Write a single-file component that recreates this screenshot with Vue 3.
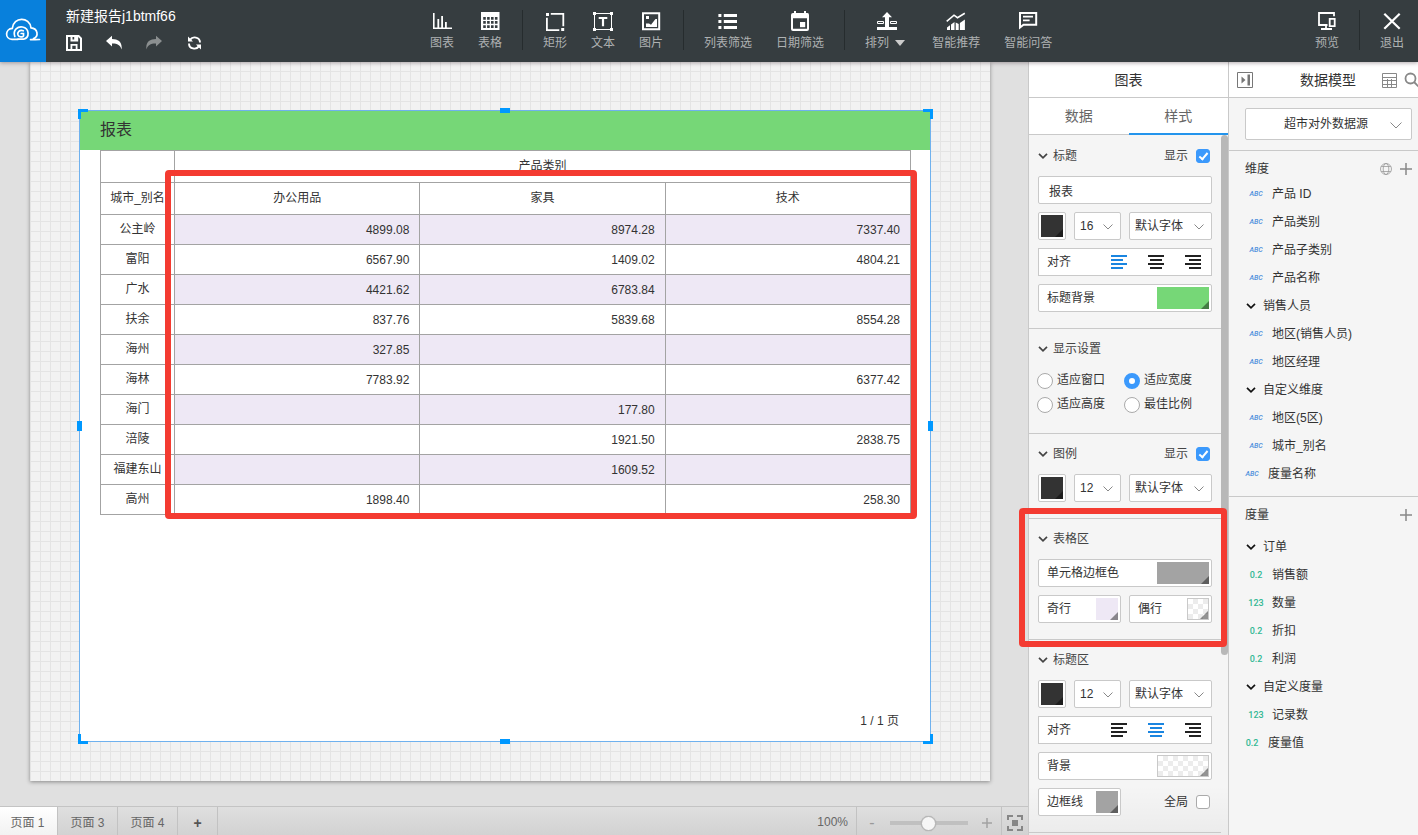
<script setup>
import { ref } from 'vue'

const icons = {
  chart: '<path d="M1 2h1.6v14.4H20V18H1z M5.4 8h1.8v8.4H5.4z M9.2 5H11v11.4H9.2z M13 11h1.8v5.4H13z"/>',
  table: '<path fill-rule="evenodd" d="M1 1h18.5v18H1z M3.2 6h2.6v2.7H3.2z M7.1 6h2.6v2.7H7.1z M11 6h2.6v2.7H11z M14.9 6h2.6v2.7h-2.6z M3.2 10.1h2.6v2.7H3.2z M7.1 10.1h2.6v2.7H7.1z M11 10.1h2.6v2.7H11z M14.9 10.1h2.6v2.7h-2.6z M3.2 14.2h2.6v2.7H3.2z M7.1 14.2h2.6v2.7H7.1z M11 14.2h2.6v2.7H11z M14.9 14.2h2.6v2.7h-2.6z"/>',
  rect: '<path d="M1 2h3v3H1z M16.2 17h3v3h-3z M5.8 2h13.4v13.3h-1.8V3.8H5.8z M1 6.8h1.8v11.4h11.5V20H1z"/>',
  text: '<path fill="none" stroke="currentColor" d="M1.5 2.5h17v16h-17z"/><path d="M0 1h3v3H0z M17 1h3v3h-3z M0 17h3v3H0z M17 17h3v3h-3z M5.7 6h8.6v2h-3.2v7.2H8.9V8H5.7z"/>',
  image: '<path fill="none" stroke="currentColor" stroke-width="2" d="M2 2.2h16.2v16H2z"/><path d="M5 5h3v3H5z M5 16v-3.6h3l2 1.4L14.500 8H16v8z"/>',
  list: '<path d="M.4 3h3v3h-3z M.4 9h3v3h-3z M.4 15h3v3h-3z M5.800 3H19v3H5.800z M5.800 9H19v3H5.800z M5.800 15H19v3H5.800z"/>',
  date: '<path fill-rule="evenodd" d="M4 0h2v2h8V0h2v2h1.500Q19 2 19 4v14q0 2-2 2H3q-2 0-2-2V4q0-2 2-2h1z M3 7.200v10.600h14V7.200z"/><path d="M10 11h5.200v5.200H10z"/>',
  arrange: '<path d="M10 1l5 5.200h-3V16h8v3H0v-3h8V6.200H5z"/><path fill="none" stroke="currentColor" d="M.5 10.500h6v2h-6z M13.500 10.500h6v2h-6z"/>',
  advise: '<path fill="none" stroke="currentColor" stroke-width="1.600" d="M.7 10.300L8 4.200l3.500 2.500L18.800 2.300"/><path d="M1 16.500l3-2.300V19H1z M5 13.500l3.500-2.500v8H5z M9.700 11.500l3 1.500v6h-3z M13.900 12l5-3.500V19h-5z"/>',
  ask: '<path fill="none" stroke="currentColor" stroke-width="2" d="M2 2h16.200v11.800H5.500L2 16.500z"/><path d="M5 4.800h10v1.700H5z M5 8.500h6.600v1.700H5z"/>',
  preview: '<path fill="none" stroke="currentColor" stroke-width="1.800" d="M17 5.200V2H2v12h8.500 M9 14v4 M4 18h11 M12.700 7.800h5v7.400h-5z"/>',
  close: '<path fill="none" stroke="currentColor" stroke-width="2.200" d="M2.300 2.800l15.400 15 M17.700 2.800l-15.400 15"/>',
  save: '<path fill-rule="evenodd" d="M0 0h13l3 3v13H0z M2 2v12h2.500V9h7v5H14V3.800L12.200 2v4.500H4.500V2z M6.500 2h1.700v2.600H6.500z M6.300 10.800v3.200h3.400v-3.200z"/>',
  undo: '<path d="M0 6l6-5.200v3.100C12.500 4 16.400 7 15.600 14.500 14.300 10.500 11.500 8.500 6 8.600v3z"/>',
  redo: '<path d="M16 6l-6-5.200v3.100C3.500 4-.4 7 .4 14.500 1.700 10.500 4.500 8.500 10 8.600v3z"/>',
  refresh: '<path fill="none" stroke="currentColor" stroke-width="1.900" d="M4.200 4.600C6.500 1.200 14 1.600 14 7.600 M12.800 11.400C10.500 14.800 3 14.400 3 8.400"/><path d="M2 1.600v5h5z M15 14.400v-5h-5z"/>'
}

const toolGroups = [
  [['chart', '图表'], ['table', '表格']],
  [['rect', '矩形'], ['text', '文本'], ['image', '图片']],
  [['list', '列表筛选'], ['date', '日期筛选']],
  [['arrange', '排列'], ['advise', '智能推荐'], ['ask', '智能问答']]
]
const quick = [['save', '保存'], ['undo', '撤销'], ['redo', '重做'], ['refresh', '刷新']]

const columns = ['办公用品', '家具', '技术']
const rows = [
  ['公主岭', '4899.08', '8974.28', '7337.40'],
  ['富阳', '6567.90', '1409.02', '4804.21'],
  ['广水', '4421.62', '6783.84', ''],
  ['扶余', '837.76', '5839.68', '8554.28'],
  ['海州', '327.85', '', ''],
  ['海林', '7783.92', '', '6377.42'],
  ['海门', '', '177.80', ''],
  ['涪陵', '', '1921.50', '2838.75'],
  ['福建东山', '', '1609.52', ''],
  ['高州', '1898.40', '', '258.30']
]

const dimensions = [
  ['ABC', '产品 ID'], ['ABC', '产品类别'], ['ABC', '产品子类别'], ['ABC', '产品名称'],
  ['group', '销售人员'], ['ABC', '地区(销售人员)'], ['ABC', '地区经理'],
  ['group', '自定义维度'], ['ABC', '地区(5区)'], ['ABC', '城市_别名'], ['ABC', '度量名称', true]
]
const measures = [
  ['group', '订单'], ['0.2', '销售额'], ['123', '数量'], ['0.2', '折扣'], ['0.2', '利润'],
  ['group', '自定义度量'], ['123', '记录数'], ['0.2', '度量值', true]
]
const fieldGroups = [
  { title: '维度', items: dimensions, globe: true },
  { title: '度量', items: measures, globe: false }
]

const fits = ['适应窗口', '适应宽度', '适应高度', '最佳比例']
const fit = ref('适应宽度')
const title = ref('报表')
const showTitle = ref(true)
const showLegend = ref(true)
const allBorders = ref(false)
const zoom = ref(50)
const titleAlign = ref('left')
const headAlign = ref('center')
const aligns = [
  ['left', 'M0 1h16M0 5h12M0 9h16M0 13h12', '左对齐'],
  ['center', 'M0 1h16M2 5h12M0 9h16M2 13h12', '居中'],
  ['right', 'M0 1h16M4 5h12M0 9h16M4 13h12', '右对齐']
]
const pages = ['页面 1', '页面 3', '页面 4']
const page = ref('页面 1')
const handles = ['tl', 'tr', 'bl', 'br', 't', 'b', 'l', 'r']
</script>

<template>
  <div class="app">
    <header class="topbar">
      <a class="logo" href="#" aria-label="首页">
        <svg viewBox="0 0 46 62" width="46" height="62" fill="none" stroke="#fff" stroke-width="1.700" stroke-linecap="round">
          <path d="M18 39.300H12C4.500 39 5 28.800 12.300 28.400 13.500 16.500 29.500 16.500 31 27.800 38 28.300 39 36.800 33.500 38.600M30.500 39.600C33 39.800 36 39.500 39.500 39.500"/>
          <path d="M14.800 36.500C12.500 29.500 18 26.300 22.500 27 29.500 28.300 30 37.500 23.500 39.200H18"/>
          <path d="M23.300 30.800C19.500 29.500 17 32.500 18 35 19 37.300 22.800 37.300 23.500 35.800V33.500H21.200"/>
        </svg>
      </a>
      <div class="report">
        <h1>新建报告j1btmf66</h1>
        <div class="quick">
          <button v-for="q in quick" :key="q[0]" :class="{ dim: q[0] === 'redo' }" :aria-label="q[1]">
            <svg viewBox="0 0 16 16" width="16" height="16" fill="currentColor" v-html="icons[q[0]]"></svg>
          </button>
        </div>
      </div>
      <nav class="tools">
        <template v-for="(group, g) in toolGroups" :key="g">
          <i v-if="g" class="rule"></i>
          <button v-for="t in group" :key="t[0]" class="tool">
            <svg viewBox="0 0 20 20" width="20" height="20" fill="currentColor" v-html="icons[t[0]]"></svg>
            <span>{{ t[1] }}<i v-if="t[0] === 'arrange'" class="caret"></i></span>
          </button>
        </template>
      </nav>
      <div class="tools end">
        <button class="tool">
          <svg viewBox="0 0 20 20" width="20" height="20" v-html="icons.preview"></svg><span>预览</span>
        </button>
        <i class="rule"></i>
        <button class="tool">
          <svg viewBox="0 0 20 20" width="20" height="20" v-html="icons.close"></svg><span>退出</span>
        </button>
      </div>
    </header>

    <div class="body">
      <main class="work">
        <div class="paper">
          <section class="widget">
            <h2>报表</h2>
            <div class="grid-wrap">
              <table>
                <colgroup><col class="c0"><col><col><col></colgroup>
                <thead>
                  <tr><th></th><th colspan="3">产品类别</th></tr>
                  <tr><th class="city">城市_别名</th><th v-for="c in columns" :key="c">{{ c }}</th></tr>
                </thead>
                <tbody>
                  <tr v-for="r in rows" :key="r[0]">
                    <th>{{ r[0] }}</th>
                    <td v-for="(v, i) in r.slice(1)" :key="i">{{ v }}</td>
                  </tr>
                </tbody>
              </table>
              <div class="mark mark-table"></div>
            </div>
            <p class="pager">1 / 1 页</p>
            <i v-for="h in handles" :key="h" class="handle" :class="h"></i>
          </section>
        </div>
        <footer class="bottom">
          <button v-for="p in pages" :key="p" class="page" :class="{ on: p === page }" @click="page = p">{{ p }}</button>
          <button class="page add" aria-label="添加页面">+</button>
          <span class="pct">100%</span>
          <div class="zoom">
            <button aria-label="缩小">-</button>
            <input v-model="zoom" type="range" min="0" max="100" aria-label="缩放">
            <button aria-label="放大" class="plus"><svg viewBox="0 0 12 12" width="12" height="12" stroke="#a2a2a2" stroke-width="1.500"><path d="M6 1v10M1 6h10"/></svg></button>
          </div>
          <button class="fitbtn" aria-label="适应屏幕">
            <svg viewBox="0 0 16 16" width="16" height="16"><path d="M6 1H1v4M10 1h5v4M6 15H1v-4M10 15h5v-4" fill="none" stroke="#868686" stroke-width="2"/><path d="M5 5h6v6H5z" fill="#868686"/></svg>
          </button>
        </footer>
      </main>

      <aside class="style">
        <h2 class="panel-title">图表</h2>
        <div class="tabs"><button>数据</button><button class="on">样式</button></div>
        <div class="sections">
          <i class="thumb"></i>
          <section>
            <div class="head">
              <svg class="chev" viewBox="0 0 10 6" width="10" height="6"><path d="M1 .8l4 4 4-4"/></svg><h3>标题</h3>
              <label class="check">显示<input v-model="showTitle" type="checkbox"></label>
            </div>
            <div class="rows">
              <input v-model="title" class="box field" type="text" aria-label="标题">
              <div class="row">
                <button class="box chip" aria-label="文字颜色"><i class="sw dark"></i></button>
                <div class="box sel size"><select aria-label="字号"><option>16</option></select><svg viewBox="0 0 10 6" width="10" height="6"><path d="M.5 .5l4.500 4.500 4.500-4.500"/></svg></div>
                <div class="box sel"><select aria-label="字体"><option>默认字体</option></select><svg viewBox="0 0 10 6" width="10" height="6"><path d="M.5 .5l4.500 4.500 4.500-4.500"/></svg></div>
              </div>
              <div class="box align"><span>对齐</span>
                <button v-for="a in aligns" :key="a[0]" :class="{ on: a[0] === titleAlign }" :aria-label="a[2]" @click="titleAlign = a[0]"><svg viewBox="0 0 16 14" width="16" height="14"><path :d="a[1]"/></svg></button>
              </div>
              <button class="box colour"><span>标题背景</span><i class="sw wide green"></i></button>
            </div>
          </section>
          <section>
            <div class="head">
              <svg class="chev" viewBox="0 0 10 6" width="10" height="6"><path d="M1 .8l4 4 4-4"/></svg><h3>显示设置</h3>
            </div>
            <div class="radios">
              <label v-for="f in fits" :key="f"><input v-model="fit" type="radio" name="fit" :value="f"><span>{{ f }}</span></label>
            </div>
          </section>
          <section>
            <div class="head">
              <svg class="chev" viewBox="0 0 10 6" width="10" height="6"><path d="M1 .8l4 4 4-4"/></svg><h3>图例</h3>
              <label class="check">显示<input v-model="showLegend" type="checkbox"></label>
            </div>
            <div class="row">
              <button class="box chip" aria-label="图例颜色"><i class="sw dark"></i></button>
              <div class="box sel size"><select aria-label="图例字号"><option>12</option></select><svg viewBox="0 0 10 6" width="10" height="6"><path d="M.5 .5l4.500 4.500 4.500-4.500"/></svg></div>
              <div class="box sel"><select aria-label="图例字体"><option>默认字体</option></select><svg viewBox="0 0 10 6" width="10" height="6"><path d="M.5 .5l4.500 4.500 4.500-4.500"/></svg></div>
            </div>
          </section>
          <section class="marked">
            <div class="head">
              <svg class="chev" viewBox="0 0 10 6" width="10" height="6"><path d="M1 .8l4 4 4-4"/></svg><h3>表格区</h3>
            </div>
            <div class="rows">
              <button class="box colour"><span>单元格边框色</span><i class="sw wide grey"></i></button>
              <div class="row halves">
                <button class="box colour"><span>奇行</span><i class="sw lilac"></i></button>
                <button class="box colour"><span>偶行</span><i class="sw clear"></i></button>
              </div>
            </div>
            <div class="mark mark-area"></div>
          </section>
          <section>
            <div class="head">
              <svg class="chev" viewBox="0 0 10 6" width="10" height="6"><path d="M1 .8l4 4 4-4"/></svg><h3>标题区</h3>
            </div>
            <div class="rows">
              <div class="row">
                <button class="box chip" aria-label="标题区颜色"><i class="sw dark"></i></button>
                <div class="box sel size"><select aria-label="标题区字号"><option>12</option></select><svg viewBox="0 0 10 6" width="10" height="6"><path d="M.5 .5l4.500 4.500 4.500-4.500"/></svg></div>
                <div class="box sel"><select aria-label="标题区字体"><option>默认字体</option></select><svg viewBox="0 0 10 6" width="10" height="6"><path d="M.5 .5l4.500 4.500 4.500-4.500"/></svg></div>
              </div>
              <div class="box align"><span>对齐</span>
                <button v-for="a in aligns" :key="a[0]" :class="{ on: a[0] === headAlign }" :aria-label="a[2]" @click="headAlign = a[0]"><svg viewBox="0 0 16 14" width="16" height="14"><path :d="a[1]"/></svg></button>
              </div>
              <button class="box colour"><span>背景</span><i class="sw wide clear"></i></button>
              <div class="row halves">
                <button class="box colour"><span>边框线</span><i class="sw grey"></i></button>
                <label class="check">全局<input v-model="allBorders" type="checkbox"></label>
              </div>
            </div>
          </section>
        </div>
      </aside>

      <aside class="model">
        <div class="panel-title model-title">
          <button aria-label="收起"><svg viewBox="0 0 16 16" width="16" height="16"><path d="M.5 .5h15v15H.5z" fill="none" stroke="#777"/><path d="M4.500 4.500L8.500 8l-4 3.500z M10.500 2.500H13v11h-2.500z" fill="#777"/></svg></button>
          <h2>数据模型</h2>
          <button aria-label="数据表"><svg viewBox="0 0 16 16" width="16" height="16" fill="none" stroke="#888"><path d="M1.500 1.500h14v14h-14zM1.500 5.500h14M1.500 8.500h14M1.500 12.500h14M6.500 7v8.500M10.500 7v8.500"/></svg></button>
          <button class="search" aria-label="搜索"><svg viewBox="0 0 16 16" width="16" height="16" fill="none" stroke="#888" stroke-width="1.800"><circle cx="6.500" cy="6.500" r="5"/><path d="M10 10l5 5"/></svg></button>
        </div>
        <div class="source">
          <div class="box sel"><select aria-label="数据源"><option>超市对外数据源</option></select><svg viewBox="0 0 12 7" width="12" height="7"><path d="M.5 .5L6 6 11.500 .5"/></svg></div>
        </div>
        <section v-for="g in fieldGroups" :key="g.title" class="fields" :class="{ first: g.globe }">
          <div class="fhead">
            <h3>{{ g.title }}</h3>
            <button v-if="g.globe" aria-label="地理"><svg viewBox="0 0 12 12" width="12" height="12" fill="none" stroke="#999" stroke-width=".8"><circle cx="6" cy="6" r="5.500"/><ellipse cx="6" cy="6" rx="2.800" ry="5.500"/><path d="M1.200 3.500h9.600M1.200 8.500h9.600"/></svg></button>
            <button :aria-label="'添加' + g.title"><svg viewBox="0 0 12 12" width="12" height="12" stroke="#888" stroke-width="1.500"><path d="M6 0v12M0 6h12"/></svg></button>
          </div>
          <ul>
            <li v-for="(f, i) in g.items" :key="i" :class="{ root: f[2], group: f[0] === 'group' }">
              <svg v-if="f[0] === 'group'" class="chev strong" viewBox="0 0 10 6" width="10" height="6"><path d="M1 .8l4 4 4-4"/></svg>
              <em v-else :class="{ abc: f[0] === 'ABC' }">{{ f[0] }}</em>
              <span>{{ f[1] }}</span>
            </li>
          </ul>
        </section>
      </aside>
    </div>
  </div>
</template>

<style>
body { margin: 0; }
</style>

<style scoped>
* { box-sizing: border-box; }
.app {
  height: 100vh; overflow: hidden; display: flex; flex-direction: column;
  font: 12px/16px "Liberation Sans", "Noto Sans CJK SC", sans-serif; color: #333; background: #e0e0e0;
}
h1, h2, h3, p, ul { margin: 0; padding: 0; font-weight: 400; font-size: 12px; }
ul { list-style: none; }
button, input, select { font: inherit; color: inherit; margin: 0; padding: 0; border: 0; background: none; border-radius: 0; outline: 0; }
button { display: flex; align-items: center; justify-content: center; cursor: pointer; }
svg { display: block; flex: none; }

.topbar { position: relative; z-index: 5; flex: none; height: 62px; display: flex; background: #363d40; color: #fff; box-shadow: 0 1px 4px rgba(60, 40, 50, .4); }
.logo { width: 46px; background: #0880dc; }
.report { width: 372px; padding: 7px 0 0 20px; }
.report h1 { font-size: 14px; line-height: 18px; }
.quick { display: flex; gap: 24px; margin-top: 10px; }
.quick .dim { color: #8b8f90; }
.tools { display: flex; align-items: flex-start; padding-top: 10px; }
.tools.end { margin-left: auto; padding-right: 2px; }
.tool { flex-direction: column; padding: 1px 12px 0; gap: 4px; }
.tool span { display: flex; align-items: center; color: #aeb1b2; line-height: 16px; }
.rule { width: 1px; height: 40px; margin: 0 8px; background: #262c2e; }
.caret { margin: 0 3px 0 6px; border: 5px solid transparent; border-top: 6px solid #ccc; border-bottom: 0; }

.body { flex: 1; min-height: 0; display: flex; }
.work { flex: 1; min-width: 0; display: flex; flex-direction: column; }
.paper {
  flex: 1; margin: 0 38px 25px 30px; padding: 48px 59px 39px 49px; display: flex; background-color: #f2f2f2;
  background-image: linear-gradient(to right, #e4e4e4 1px, transparent 1px), linear-gradient(#e4e4e4 1px, transparent 1px);
  background-size: 10px 10px; background-position: 0 9px; box-shadow: 0 1px 4px rgba(0, 0, 0, .4);
}
.widget { position: relative; flex: 1; display: flex; flex-direction: column; border: 1px solid #6fb1ee; background: #fff; }
.widget h2 { height: 39px; padding-left: 20px; background: #76d777; font-size: 16px; line-height: 38px; }
.grid-wrap { position: relative; margin: 0 19px 0 20px; }
table { width: 100%; table-layout: fixed; border-collapse: collapse; }
.c0 { width: 74px; }
th, td { border: 1px solid #a3a3a3; padding: 0; height: 30px; line-height: 16px; font-weight: 400; overflow: hidden; white-space: nowrap; }
th { padding-bottom: 2px; }
thead th { height: 32px; }
td { text-align: right; padding-right: 10px; }
tbody tr:nth-child(odd) td { background: #eee8f5; }
.mark { position: absolute; border: 6px solid #f43b31; border-radius: 4px; pointer-events: none; z-index: 3; }
.mark-table { inset: 20px -6px -4px 65px; }
.mark-area { inset: -11px -6px -8px -10px; }
.pager { margin: auto 31px 12px auto; }
.handle { position: absolute; width: 10px; height: 10px; border: 0 solid #0098ff; }
.tl { top: -2px; left: -2px; border-width: 3px 0 0 3px; }
.tr { top: -2px; right: -3px; border-width: 3px 3px 0 0; }
.bl { bottom: -3px; left: -2px; border-width: 0 0 3px 3px; }
.br { bottom: -3px; right: -3px; border-width: 0 3px 3px 0; }
.t, .b { left: calc(50% - 5px); height: 5px; background: #0098ff; }
.l, .r { top: calc(50% - 5px); width: 5px; background: #0098ff; }
.t { top: -3px; }
.b { bottom: -3px; }
.l { left: -3px; }
.r { right: -3px; }

.bottom { flex: none; height: 29px; display: flex; align-items: stretch; border-top: 1px solid #c4c4c4; background: linear-gradient(#dfdfdf, #d2d2d2); color: #666; }
.page { width: 60px; padding-top: 4px; border-right: 1px solid #c2c2c2; }
.page:first-child { width: 58px; padding-right: 2px; }
.page.on { background: linear-gradient(#fff, #f2f2f2); }
.page.add { width: 40px; font-size: 14px; font-weight: 700; color: #555; }
.pct { margin-left: auto; padding-right: 8px; line-height: 30px; border-right: 1px solid #c2c2c2; }
.zoom { width: 145px; padding: 4px 8px 0 11px; display: flex; align-items: center; justify-content: space-between; border-right: 1px solid #c2c2c2; color: #999; }
.zoom button { height: 20px; width: 8px; font-size: 16px; }
.zoom .plus { width: 12px; }
.zoom input { width: 78px; height: 16px; appearance: none; background: linear-gradient(#c0c0c0, #c0c0c0) center / 100% 4px no-repeat; }
.zoom input::-webkit-slider-thumb { appearance: none; width: 15px; height: 15px; border-radius: 50%; border: 1px solid #b5b5b5; background: #f6f6f6; box-shadow: 0 0 1px #999; }
.fitbtn { width: 26px; padding-top: 4px; }

aside { flex: none; background: #f5f5f5; border-left: 1px solid #c9c9c9; display: flex; flex-direction: column; }
.style { width: 200px; }
.panel-title { flex: none; height: 36px; background: #fff; border-bottom: 1px solid #c9c9c9; font-size: 14px; line-height: 36px; text-align: center; }
.tabs { flex: none; height: 37px; display: flex; background: #fff; border-bottom: 1px solid #c9c9c9; color: #666; font-size: 14px; }
.tabs button { flex: 1; height: 37px; border-bottom: 2px solid transparent; }
.tabs .on { border-color: #2394ec; }
.sections { position: relative; flex: 1; min-height: 0; padding: 1px 7px 0 0; background: linear-gradient(transparent calc(100% - 50px), rgba(0, 0, 0, .04)); }
.thumb { position: absolute; right: 0; top: 0; width: 7px; height: 520px; border-radius: 4px; background: #b8b8b8; }
.style section { padding: 0 9px 16px; border-bottom: 1px solid #c9c9c9; }
.style section.marked { position: relative; }
.head { height: 40px; display: flex; align-items: center; gap: 5px; color: #444; }
.chev { fill: none; stroke: #444; stroke-width: 1.7; }
.strong { stroke: #111; }
.rows { display: flex; flex-direction: column; gap: 8px; }
.row { display: flex; gap: 8px; }
.halves { display: grid; grid-template-columns: 1fr 1fr; }
.check { margin-left: auto; display: flex; align-items: center; gap: 8px; padding-right: 2px; }
.check input { position: relative; width: 14px; height: 14px; appearance: none; border: 1px solid #aaa; border-radius: 3px; background: #fff; }
.check input:checked { background: #3b99fc; border-color: #3b99fc; }
.check input:checked::after { content: ""; position: absolute; left: 4px; top: 1px; width: 3px; height: 7px; border: solid #fff; border-width: 0 2px 2px 0; transform: rotate(40deg); }
.box { height: 28px; border: 1px solid #c9c9c9; background: #fff; border-radius: 2px; }
.field { width: 100%; padding: 0 10px; }
.chip { width: 28px; padding: 2px; flex: none; }
.sw { position: relative; display: block; width: 22px; height: 22px; }
.sw.wide { width: 52px; }
.sw::after { content: ""; position: absolute; right: 0; bottom: 0; border: 4px solid; border-color: transparent rgba(0, 0, 0, .42) rgba(0, 0, 0, .42) transparent; }
.dark { background: #333; }
.green { background: #76d777; }
.grey { background: #a3a3a3; }
.lilac { background: #eee8f5; }
.clear { border: 1px solid #c9c9c9; background: repeating-conic-gradient(#ececec 0 25%, #fff 0 50%) 0 0 / 10px 10px; }
.sel { position: relative; flex: 1; display: flex; }
.sel.size { flex: 0 0 47px; }
.sel select { width: 100%; height: 26px; padding-left: 5px; appearance: none; }
.sel svg { position: absolute; right: 7px; top: 11px; fill: none; stroke: #888; pointer-events: none; }
.align { display: flex; align-items: center; padding: 0 10px 0 8px; gap: 21px; border-radius: 0; }
.align span { margin-right: auto; }
.align svg { stroke: #222; stroke-width: 2; }
.align .on svg { stroke: #1a85e0; }
.colour { width: 100%; justify-content: space-between; padding: 0 2px 0 8px; }
.radios { display: grid; grid-template-columns: 87px 87px; }
.radios label { height: 24px; display: flex; align-items: center; gap: 4px; margin-left: -1px; }
.radios span { line-height: 20px; padding-bottom: 3px; }
.radios input { width: 16px; height: 16px; appearance: none; border: 1px solid #aaa; border-radius: 50%; background: #fff; }
.radios input:checked { border: 5px solid #3b99fc; }

.model { width: 190px; }
.model-title { display: flex; align-items: center; gap: 7px; padding-left: 8px; }
.model-title h2 { flex: 1; font-size: 14px; padding-left: 22px; }
.search { margin-right: -2px; }
.source { flex: none; padding: 10px 6px 10px 16px; border-bottom: 1px solid #c9c9c9; }
.source .sel { height: 32px; }
.source select { height: 30px; padding: 0 27px 0 22px; text-align: center; text-align-last: center; }
.source .sel svg { right: 9px; top: 13px; }
.fields { padding: 0 0 8px; border-bottom: 1px solid #c9c9c9; }
.fields:last-child { border: 0; }
.fhead { height: 36px; display: flex; align-items: center; gap: 8px; padding: 0 6px 0 16px; }
.fhead h3 { margin-right: auto; }
.first .fhead { height: 29px; padding-top: 6px; }
li { height: 28px; display: flex; align-items: center; padding-left: 19px; }
li.root { padding-left: 15px; }
li.group { padding-left: 17px; gap: 7px; }
em { width: 16px; margin-right: 8px; text-align: center; font-family: Roboto, sans-serif; font-style: normal; font-weight: 500; font-size: 9px; color: #33b894; }
em.abc { font-size: 7px; font-style: italic; color: #4d8fdc; }
</style>
